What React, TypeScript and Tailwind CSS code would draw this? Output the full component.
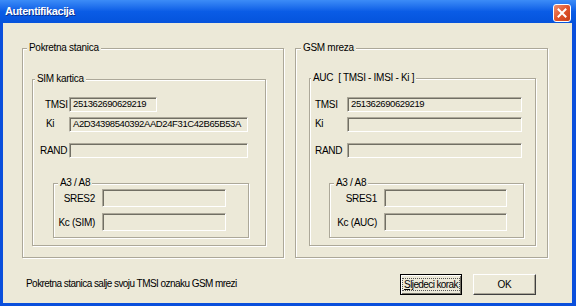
import React from 'react';

const font = "font-['Liberation_Sans',Arial,sans-serif]";

const Legend: React.FC<{ text: string; ml: string }> = ({ text, ml }) => (
  <div className={`-mt-[7px] ${ml} w-fit bg-[#ECE9D8] px-[2px] h-[12px] leading-[12px] whitespace-pre`}>
    {text}
  </div>
);

const Field: React.FC<{ w: string; h: string; value?: string }> = ({ w, h, value }) => (
  <div
    className={`${w} ${h} border border-t-[#ACA899] border-l-[#ACA899] border-b-white border-r-white shadow-[inset_1px_1px_0_#716F64] bg-[#ECE9D8] flex items-center pl-[3px] text-black text-[9.5px] tracking-[-0.4px] whitespace-nowrap overflow-hidden`}
  >
    {value}
  </div>
);

const Box = 'border border-[#ACA899] shadow-[1px_1px_0_#fff,inset_1px_1px_0_#fff]';

const App: React.FC = () => {
  return (
    <div className={`w-[576px] h-[306px] flex flex-col bg-[#0A4FDC] text-[10px] tracking-[-0.3px] text-black ${font}`}>
      {/* title bar */}
      <div className="h-[23px] flex items-center justify-between pl-[5px] pr-[5px] bg-gradient-to-b from-[#3C8CF7] via-[#0A5CE6] to-[#0553DC]">
        <span className="text-white font-bold text-[11px] tracking-[-0.4px] [text-shadow:1px_1px_0_#0A2F8F]">Autentifikacija</span>
        <div className="w-[18px] h-[18px] mt-[2px] rounded-[3px] border border-white bg-gradient-to-br from-[#EE8E6E] via-[#E0542C] to-[#C83D16] flex items-center justify-center">
          <svg width="10" height="10" viewBox="0 0 10 10">
            <path d="M1.5 1.5 L8.5 8.5 M8.5 1.5 L1.5 8.5" stroke="#fff" strokeWidth="2" strokeLinecap="square" />
          </svg>
        </div>
      </div>

      {/* body */}
      <div className="flex-1 ml-[3px] mr-[4px] mb-[3px] bg-[#ECE9D8] flex flex-col">
        <div className="flex pl-[19px] pt-[25px] gap-[11px]">
          {/* Pokretna stanica */}
          <div className={`w-[262px] h-[210px] ${Box}`}>
            <Legend text="Pokretna stanica" ml="ml-[4px]" />
            <div className={`mt-[25px] ml-[9px] w-[234px] h-[167px] ${Box}`}>
              <Legend text="SIM kartica" ml="ml-[2px]" />
              <div className="mt-[12px] flex items-center h-[15px]">
                <div className="w-[36px] pl-[12px]">TMSI</div>
                <Field w="w-[88px]" h="h-[15px]" value="251362690629219" />
              </div>
              <div className="mt-[5px] flex items-center h-[15px]">
                <div className="w-[36px] pl-[13px] -mt-[3px]">Ki</div>
                <Field w="w-[179px]" h="h-[15px]" value="A2D34398540392AAD24F31C42B65B53A" />
              </div>
              <div className="mt-[11px] flex items-center h-[15px]">
                <div className="w-[36px] pl-[7px]">RAND</div>
                <Field w="w-[179px]" h="h-[15px]" />
              </div>
              <div className={`mt-[25px] ml-[20px] w-[196px] h-[55px] ${Box}`}>
                <Legend text="A3 / A8" ml="ml-[4px]" />
                <div className="flex items-center gap-[7px] h-[18px]">
                  <div className="w-[41px] text-right">SRES2</div>
                  <Field w="w-[124px]" h="h-[18px]" />
                </div>
                <div className="mt-[6px] flex items-center gap-[7px] h-[18px]">
                  <div className="w-[41px] text-right">Kc (SIM)</div>
                  <Field w="w-[124px]" h="h-[18px]" />
                </div>
              </div>
            </div>
          </div>

          {/* GSM mreza */}
          <div className={`w-[253px] h-[210px] ${Box}`}>
            <Legend text="GSM mreza" ml="ml-[5px]" />
            <div className={`mt-[24px] ml-[13px] w-[227px] h-[168px] ${Box}`}>
              <Legend text="AUC  [ TMSI - IMSI - Ki ]" ml="ml-[1px]" />
              <div className="mt-[13px] flex items-center h-[15px]">
                <div className="w-[37px] pl-[5px]">TMSI</div>
                <Field w="w-[175px]" h="h-[15px]" value="251362690629219" />
              </div>
              <div className="mt-[5px] flex items-center h-[15px]">
                <div className="w-[37px] pl-[5px] -mt-[3px]">Ki</div>
                <Field w="w-[175px]" h="h-[15px]" />
              </div>
              <div className="mt-[11px] flex items-center h-[15px]">
                <div className="w-[37px] pl-[5px]">RAND</div>
                <Field w="w-[175px]" h="h-[15px]" />
              </div>
              <div className={`mt-[25px] ml-[19px] w-[195px] h-[55px] ${Box}`}>
                <Legend text="A3 / A8" ml="ml-[4px]" />
                <div className="flex items-center gap-[7px] h-[18px]">
                  <div className="w-[47px] text-right">SRES1</div>
                  <Field w="w-[123px]" h="h-[18px]" />
                </div>
                <div className="mt-[6px] flex items-center gap-[7px] h-[18px]">
                  <div className="w-[47px] text-right">Kc (AUC)</div>
                  <Field w="w-[123px]" h="h-[18px]" />
                </div>
              </div>
            </div>
          </div>
        </div>

        {/* bottom row */}
        <div className="flex items-start pt-[16px] pl-[23px]">
          <div className="mt-[4px] leading-[12px] tracking-[-0.55px]">Pokretna stanica salje svoju TMSI oznaku GSM mrezi</div>
          <div className="ml-auto flex gap-[11px] pr-[36px]">
            <button className="w-[62px] h-[21px] border border-black bg-[#ECE9D8] shadow-[inset_1px_1px_0_#fff,inset_-1px_-1px_0_#716F64] flex items-center justify-center p-0">
              <span className="border border-dotted border-[#555] px-[1px] leading-[11px] whitespace-nowrap tracking-[-0.6px]">
                <span className="underline">S</span>ljedeci korak
              </span>
            </button>
            <button className="w-[63px] h-[21px] border border-t-white border-l-white border-b-[#404040] border-r-[#404040] shadow-[inset_-1px_-1px_0_#ACA899] bg-[#ECE9D8] flex items-center justify-center p-0">
              OK
            </button>
          </div>
        </div>
      </div>
    </div>
  );
};

export default App;
